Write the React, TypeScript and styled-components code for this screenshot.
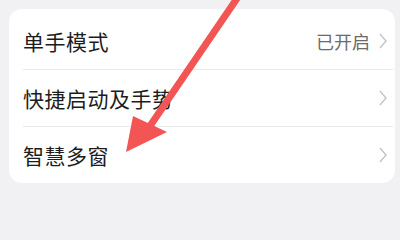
import React from 'react';
import styled, { createGlobalStyle } from 'styled-components';

const GlobalStyle = createGlobalStyle`
    html, body {
        margin: 0;
        padding: 0;
        background: #f1f1f3;
    }
    body {
        font-family: "Noto Sans CJK SC", "Noto Sans", sans-serif;
    }
`;

interface SettingItem {
    label: string;
    value?: string;
}

const items: SettingItem[] = [
    { label: '单手模式', value: '已开启' },
    { label: '快捷启动及手势' },
    { label: '智慧多窗' }
];

const Page = styled.div`
    position: relative;
    width: 400px;
    height: 201px;
    overflow: hidden;
    padding: 9px 5px 0 9px;
    box-sizing: border-box;
`;

const Card = styled.ul`
    margin: 0;
    padding: 4px 0 0 14px;
    list-style-type: none;
    background: #ffffff;
    border-radius: 13px;
`;

const Row = styled.li<{ $last: boolean }>`
    display: flex;
    align-items: center;
    height: 56px;
    padding-right: 6px;
    margin-right: 2px;
    border-bottom: ${(p) => (p.$last ? 'none' : '1px solid #ebebeb')};
`;

const Label = styled.span`
    flex: 1;
    font-size: 21px;
    color: #1c1c1c;
    letter-spacing: 0.5px;
`;

const Value = styled.span`
    font-size: 18px;
    color: #6b6b6b;
    margin-right: 9px;
`;

const Chevron = styled.svg`
    width: 8px;
    height: 16px;
    flex: none;
`;

const Overlay = styled.svg`
    position: absolute;
    left: 0;
    top: 0;
    pointer-events: none;
`;

function Arrow() {
    return (
        <Overlay width={400} height={201} viewBox="0 0 400 201">
            <line x1={240} y1={-6} x2={150} y2={126} stroke="#f25553" strokeWidth={7} />
            <polygon points="126,152 133,116 167,132" fill="#f25553" />
        </Overlay>
    );
}

export default function App() {
    return (
        <Page>
            <GlobalStyle />
            <Card>
                {items.map((item, i) => (
                    <Row key={item.label} $last={i === items.length - 1}>
                        <Label>{item.label}</Label>
                        {item.value && <Value>{item.value}</Value>}
                        <Chevron viewBox="0 0 8 16">
                            <path d="M1 1 L7 8 L1 15" fill="none" stroke="#c4c4c4" strokeWidth={1.4} />
                        </Chevron>
                    </Row>
                ))}
            </Card>
            <Arrow />
        </Page>
    );
}
